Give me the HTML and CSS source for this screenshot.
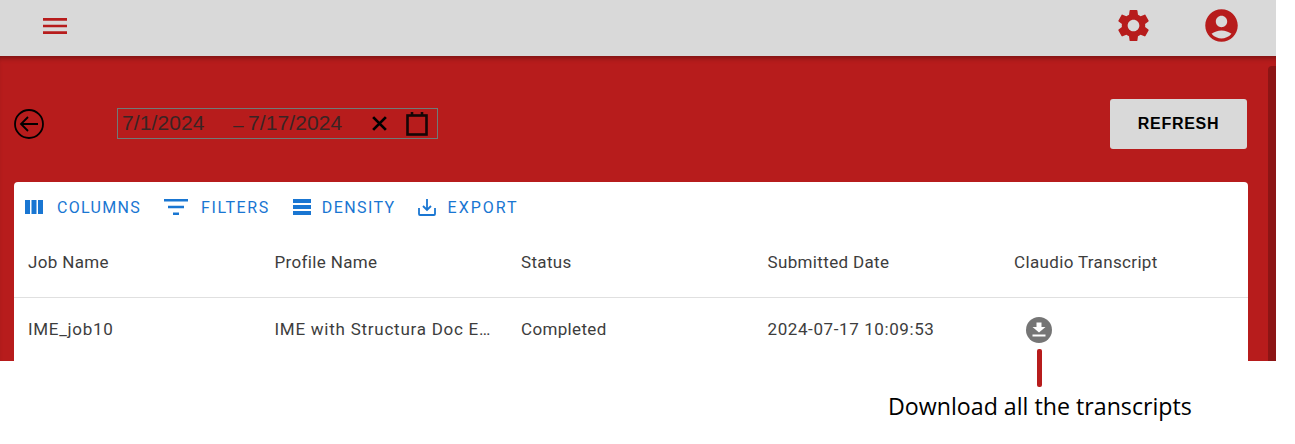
FILE: index.html

```html
<!DOCTYPE html>
<html lang="en">
<head>
    <meta charset="UTF-8">
    <title>Jobs</title>
    <link rel="stylesheet" href="styles.css">
</head>
<body>
    <div class="app">
        <header class="topbar">
            <svg class="menu-icon" viewBox="0 0 24 24"><path d="M3 18h18v-2H3v2zm0-5h18v-2H3v2zm0-7v2h18V6H3z"/></svg>
            <div class="topbar-right">
                <svg class="settings-icon" viewBox="0 0 24 24"><path d="M19.14 12.94c.04-.3.06-.61.06-.94 0-.32-.02-.64-.07-.94l2.03-1.58c.18-.14.23-.41.12-.61l-1.92-3.32c-.12-.22-.37-.29-.59-.22l-2.39.96c-.5-.38-1.03-.7-1.62-.94l-.36-2.54c-.04-.24-.24-.41-.48-.41h-3.84c-.24 0-.43.17-.47.41l-.36 2.54c-.59.24-1.13.57-1.62.94l-2.39-.96c-.22-.08-.47 0-.59.22L2.74 8.87c-.12.21-.08.47.12.61l2.03 1.58c-.05.3-.09.63-.09.94s.02.64.07.94l-2.03 1.58c-.18.14-.23.41-.12.61l1.92 3.32c.12.22.37.29.59.22l2.39-.96c.5.38 1.03.7 1.62.94l.36 2.54c.05.24.24.41.48.41h3.84c.24 0 .44-.17.47-.41l.36-2.54c.59-.24 1.13-.56 1.62-.94l2.39.96c.22.08.47 0 .59-.22l1.92-3.32c.12-.22.07-.47-.12-.61l-2.01-1.58zM12 15.6c-1.98 0-3.6-1.62-3.6-3.6s1.62-3.6 3.6-3.6 3.6 1.62 3.6 3.6-1.62 3.6-3.6 3.6z"/></svg>
                <svg class="account-icon" viewBox="0 0 24 24"><path d="M12 2C6.48 2 2 6.48 2 12s4.48 10 10 10 10-4.48 10-10S17.52 2 12 2zm0 4c1.93 0 3.5 1.57 3.5 3.5S13.93 13 12 13s-3.5-1.57-3.5-3.5S10.07 6 12 6zm0 14c-2.03 0-4.43-.82-6.14-2.88C7.55 15.8 9.68 15 12 15s4.45.8 6.14 2.12C16.43 19.18 14.03 20 12 20z"/></svg>
            </div>
        </header>

        <main class="content">
            <div class="scrollbar"></div>
            <div class="controls">
                <svg class="back-icon" viewBox="0 0 30 30">
                    <circle cx="15" cy="15" r="14"/>
                    <path d="M24 15H7M14 8l-7 7 7 7"/>
                </svg>
                <div class="date-range">
                    <span class="date-from">7/1/2024</span>
                    <span class="date-dash">–</span>
                    <span class="date-to">7/17/2024</span>
                    <svg class="clear-icon" viewBox="0 0 16 16"><path d="M2 2l12 12M14 2L2 14"/></svg>
                    <svg class="calendar-icon" viewBox="0 0 22 24">
                        <rect x="1.5" y="3.5" width="19" height="19"/>
                        <path d="M6 0v4M16 0v4"/>
                    </svg>
                </div>
                <button class="refresh-btn">REFRESH</button>
            </div>

            <section class="card">
                <div class="toolbar">
                    <span class="tool tool-columns">
                        <svg viewBox="0 0 18 14"><path d="M0 0h5v14H0zM6.5 0h5v14h-5zM13 0h5v14h-5z"/></svg>
                        COLUMNS
                    </span>
                    <span class="tool tool-filters">
                        <svg viewBox="0 0 24 16"><path d="M0 0h24v2.6H0zM4 6.7h16v2.6H4zM9 13.4h6V16H9z"/></svg>
                        FILTERS
                    </span>
                    <span class="tool tool-density">
                        <svg viewBox="0 0 18 16"><path d="M0 0h18v4H0zM0 6h18v4H0zM0 12h18v4H0z"/></svg>
                        DENSITY
                    </span>
                    <span class="tool tool-export">
                        <svg viewBox="0 0 18 18"><path d="M1 10v6a1 1 0 0 0 1 1h14a1 1 0 0 0 1-1v-6M9 1v11M5 8l4 4 4-4"/></svg>
                        EXPORT
                    </span>
                </div>
                <div class="row row-head">
                    <div>Job Name</div>
                    <div>Profile Name</div>
                    <div>Status</div>
                    <div>Submitted Date</div>
                    <div>Claudio Transcript</div>
                </div>
                <div class="row row-body">
                    <div class="cell-job">IME_job10</div>
                    <div class="cell-clip">IME with Structura Doc E…</div>
                    <div>Completed</div>
                    <div class="cell-date">2024-07-17 10:09:53</div>
                    <div>
                        <svg class="download-icon" viewBox="0 0 26 26">
                            <circle cx="13" cy="13" r="13"/>
                            <path class="arrow" d="M10.5 5.500h5V10h4l-6.500 5.500L6.500 10h4z"/>
                            <path class="arrow" d="M6.500 17.500h13v2h-13z"/>
                        </svg>
                    </div>
                </div>
            </section>
        </main>

        <div class="marker"></div>
        <p class="caption">Download all the transcripts</p>
    </div>
</body>
</html>
```

FILE: styles.css

```css
body {
    margin: 0;
    background-color: #fff;
    font-family: Roboto, sans-serif;
    overflow: hidden;
}
.app {
    position: relative;
    width: 1276px;
    height: 444px;
}
.topbar {
    height: 56px;
    background: #d9d9d9;
    display: flex;
    align-items: center;
    justify-content: space-between;
    padding: 0 35px 4px 39px;
    box-sizing: border-box;
}
.topbar svg {
    fill: #b71c1c;
    display: block;
}
.menu-icon {
    width: 32px;
    height: 32px;
}
.topbar-right {
    display: flex;
    align-items: center;
    gap: 49px;
    margin-top: -2px;
}
.settings-icon, .account-icon {
    width: 39px;
    height: 39px;
}
.content {
    position: relative;
    height: 305px;
    background: #b71c1c;
    box-shadow: inset 0 5px 5px -3px rgba(0, 0, 0, 0.35);
    padding: 43px 29px 0 14px;
    box-sizing: border-box;
    overflow: hidden;
}
.scrollbar {
    position: absolute;
    top: 10px;
    right: 0;
    bottom: 0;
    width: 8px;
    background: #8c1515;
    border-radius: 4px 0 0 0;
}
.controls {
    display: flex;
    align-items: center;
    height: 50px;
}
.back-icon {
    width: 30px;
    height: 30px;
    fill: none;
    stroke: #000;
    stroke-width: 1.8;
    margin: 0 73px 1px 0;
}
.date-range {
    width: 321px;
    height: 31px;
    margin-bottom: 1px;
    box-sizing: border-box;
    border: 1px solid #6f7a78;
    display: flex;
    align-items: center;
    font-family: "Liberation Sans", Arial, sans-serif;
    font-size: 21px;
    letter-spacing: 0.1px;
    color: #3a2424;
    padding-left: 4px;
}
.date-from {
    width: 111px;
    margin-top: -2px;
}
.date-dash {
    width: 15px;
    font-size: 19px;
    padding-top: 3px;
}
.date-to {
    width: 122px;
    margin-top: -2px;
}
.clear-icon {
    width: 17px;
    height: 17px;
    margin-left: 1px;
    fill: none;
    stroke: #000;
    stroke-width: 2.600;
}
.calendar-icon {
    width: 22px;
    height: 24px;
    margin-left: 18px;
    fill: none;
    stroke: #140606;
    stroke-width: 2.600;
}
.refresh-btn {
    margin-left: auto;
    width: 137px;
    height: 50px;
    border: none;
    border-radius: 3px;
    background: #d9d9d9;
    color: #000;
    font-family: "Liberation Sans", Arial, sans-serif;
    font-weight: bold;
    font-size: 16px;
    letter-spacing: 0.7px;
    cursor: pointer;
}
.card {
    margin-top: 33px;
    width: 1234px;
    background: #fff;
    border-radius: 4px 4px 0 0;
}
.toolbar {
    display: flex;
    align-items: center;
    height: 50px;
    padding-left: 11px;
    box-sizing: border-box;
    color: #1976d2;
    font-size: 16px;
    letter-spacing: 1.4px;
}
.tool {
    display: flex;
    align-items: center;
    margin-right: 23px;
}
.tool svg {
    fill: #1976d2;
    display: block;
}
.tool-columns {
    letter-spacing: 1.3px;
}
.tool-columns svg {
    width: 18px;
    height: 14px;
    margin-right: 14px;
}
.tool-filters {
    letter-spacing: 1.6px;
}
.tool-filters svg {
    width: 24px;
    height: 16px;
    margin-right: 13px;
}
.tool-density {
    margin-right: 22px;
}
.tool-density svg {
    width: 18px;
    height: 16px;
    margin-right: 11px;
}
.tool-export {
    letter-spacing: 2px;
}
.tool-export svg {
    width: 18px;
    height: 18px;
    margin-right: 12px;
    fill: none;
    stroke: #1976d2;
    stroke-width: 1.8;
}
.row {
    display: grid;
    grid-template-columns: repeat(5, 246.5px);
    align-items: center;
    padding-left: 14px;
    font-size: 17px;
    letter-spacing: 0.35px;
    color: #3d3d3d;
}
.row-head {
    height: 66px;
    border-bottom: 1px solid #e0e0e0;
    padding-bottom: 6px;
    box-sizing: border-box;
}
.row-body {
    height: 63px;
    padding-bottom: 2px;
    box-sizing: border-box;
}
.cell-job {
    letter-spacing: 0.7px;
}
.cell-clip {
    white-space: nowrap;
    letter-spacing: 0.75px;
}
.cell-date {
    letter-spacing: 0.6px;
}
.download-icon {
    display: block;
    width: 26px;
    height: 26px;
    margin: 2px 0 0 12px;
    fill: #757575;
}
.download-icon .arrow {
    fill: #fff;
}
.marker {
    position: absolute;
    left: 1037px;
    top: 349px;
    width: 5px;
    height: 38px;
    background: #b71c1c;
    border-radius: 2px;
}
.caption {
    position: absolute;
    left: 888px;
    top: 390px;
    margin: 0;
    font-family: "Open Sans", sans-serif;
    font-size: 23.2px;
    color: #000;
}
```
